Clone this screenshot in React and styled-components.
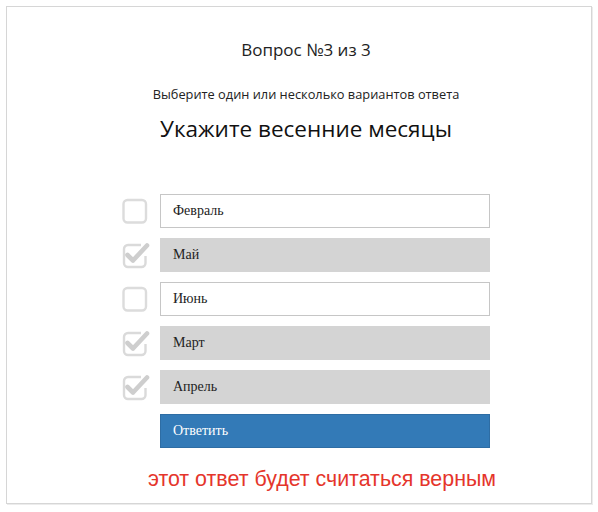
import React from 'react';
import styled, { createGlobalStyle } from 'styled-components';

const GlobalStyle = createGlobalStyle`
  body {
    margin: 0;
    background: #fff;
    font-family: "Open Sans", "Liberation Sans", sans-serif;
  }
`

const Frame = styled.div`
  box-sizing: border-box;
  margin: 6px;
  width: 586px;
  height: 498px;
  border: 1px solid #d6d6d6;
  box-shadow: 1px 1px 0 #ececec;
  padding: 31px 0 0 14px;
  display: flex;
  flex-direction: column;
  align-items: center;
`

const Counter = styled.div`
  font-family: "Open Sans", "Liberation Sans", sans-serif;
  font-size: 17px;
  color: #222;
  line-height: 23px;
`

const Hint = styled.div`
  margin-top: 25px;
  font-family: "Open Sans", "Liberation Sans", sans-serif;
  font-size: 12.8px;
  color: #222;
  line-height: 16px;
`

const Question = styled.h2`
  margin: 12px 0 0;
  font-family: "Open Sans", "Liberation Sans", sans-serif;
  font-weight: 400;
  font-size: 22.5px;
  color: #111;
  line-height: 30px;
`

const Options = styled.div`
  margin-top: 50px;
  display: flex;
  flex-direction: column;
  gap: 10px;
`

const Row = styled.label`
  display: flex;
  align-items: center;
  gap: 10px;
`

const BoxWrap = styled.span`
  width: 28px;
  height: 28px;
  display: flex;
  align-items: center;
  justify-content: center;
`

const Answer = styled.div`
  box-sizing: border-box;
  width: 330px;
  height: 34px;
  padding: 0 12px;
  display: flex;
  align-items: center;
  font-family: "Liberation Serif", "Times New Roman", serif;
  font-size: 14px;
  color: #222;
  background: ${p => (p.checked ? '#d4d4d4' : '#fff')};
  border: 1px solid ${p => (p.checked ? '#d4d4d4' : '#c6c6c6')};
`

const Submit = styled.button`
  box-sizing: border-box;
  margin-left: 38px;
  width: 330px;
  height: 34px;
  padding: 0 12px;
  text-align: left;
  font-family: "Liberation Serif", "Times New Roman", serif;
  font-size: 14px;
  color: #fff;
  background: #337ab7;
  border: 1px solid #2e6da4;
  border-radius: 0;
`

const Note = styled.div`
  margin-top: 18px;
  margin-left: 32px;
  font-family: "Liberation Sans", Arial, sans-serif;
  font-size: 21.4px;
  color: #e5352b;
  line-height: 26px;
`

const CheckBox = ({ checked }) => (
  <BoxWrap>
    <svg width="28" height="28" viewBox="0 0 28 28">
      {checked ? (
        <>
          <path
            d="M19 4 H6 a4 4 0 0 0 -4 4 V22 a4 4 0 0 0 4 4 H19.5 a4 4 0 0 0 4 -4 V15"
            fill="none"
            stroke="#dadada"
            strokeWidth="2.4"
          />
          <path
            d="M5.5 14 L11 19.5 L25 4.5"
            fill="none"
            stroke="#cecece"
            strokeWidth="4.6"
            strokeLinecap="round"
            strokeLinejoin="round"
          />
        </>
      ) : (
        <rect x="1.5" y="3" width="22.5" height="22.5" rx="4" fill="none" stroke="#dcdcdc" strokeWidth="2.4" />
      )}
    </svg>
  </BoxWrap>
)

const answers = [
  { text: 'Февраль', checked: false },
  { text: 'Май', checked: true },
  { text: 'Июнь', checked: false },
  { text: 'Март', checked: true },
  { text: 'Апрель', checked: true },
]

export default function App() {
  return (
    <>
      <GlobalStyle />
      <Frame>
        <Counter>Вопрос №3 из 3</Counter>
        <Hint>Выберите один или несколько вариантов ответа</Hint>
        <Question>Укажите весенние месяцы</Question>
        <Options>
          {answers.map(a => (
            <Row key={a.text}>
              <CheckBox checked={a.checked} />
              <Answer checked={a.checked}>{a.text}</Answer>
            </Row>
          ))}
          <Submit>Ответить</Submit>
        </Options>
        <Note>этот ответ будет считаться верным</Note>
      </Frame>
    </>
  );
}
